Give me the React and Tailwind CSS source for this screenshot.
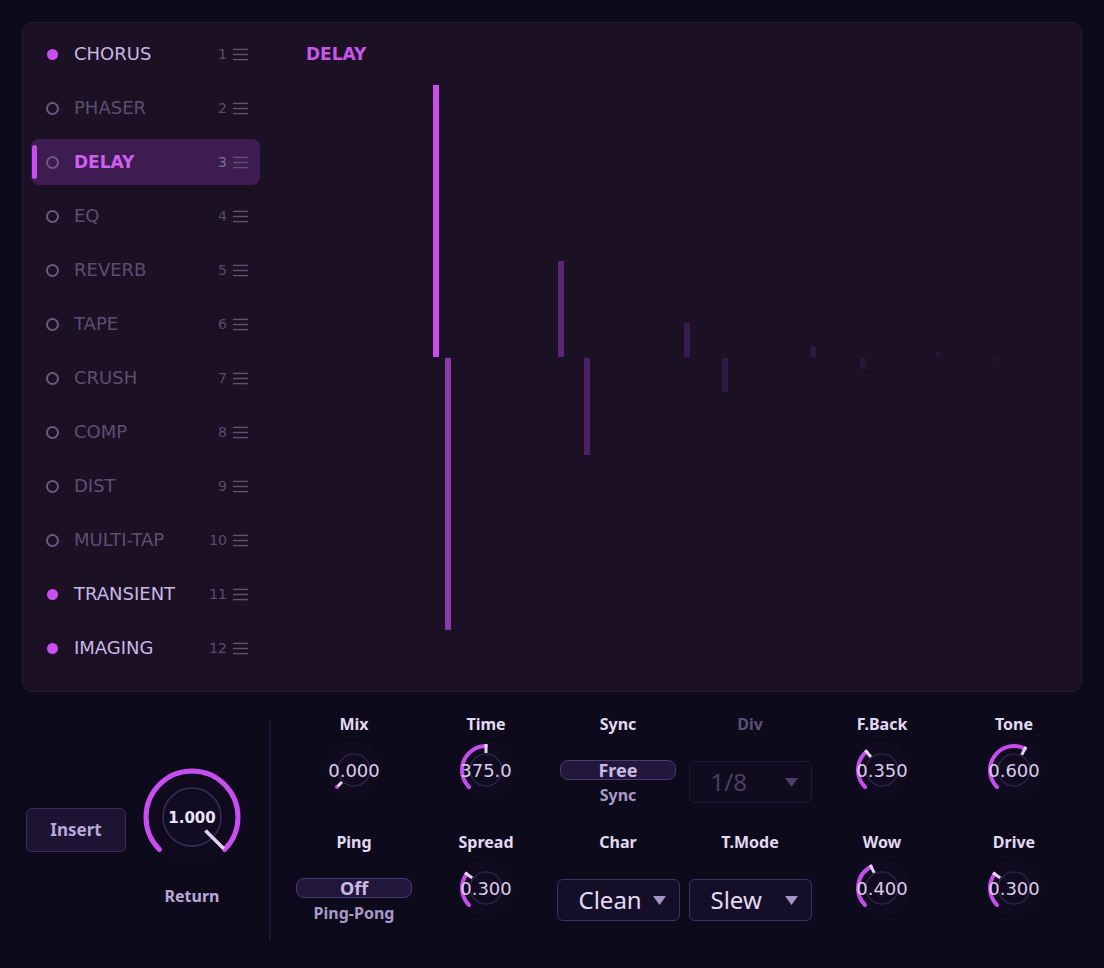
import React from "react";

const SANS = { fontFamily: '"DejaVu Sans", sans-serif' };
const NOTO = { fontFamily: '"Noto Sans", sans-serif' };

const SLOTS = [
  { name: "CHORUS", on: true },
  { name: "PHASER", on: false },
  { name: "DELAY", on: false, selected: true },
  { name: "EQ", on: false },
  { name: "REVERB", on: false },
  { name: "TAPE", on: false },
  { name: "CRUSH", on: false },
  { name: "COMP", on: false },
  { name: "DIST", on: false },
  { name: "MULTI-TAP", on: false },
  { name: "TRANSIENT", on: true },
  { name: "IMAGING", on: true },
];

// impulse bars in page coords, chart svg origin is (280, 80)
const TAPS = [
  { x: 433, y0: 85, y1: 357, c: "#c94ef0" },
  { x: 445, y0: 358, y1: 630, c: "#8b3aa9" },
  { x: 558, y0: 261, y1: 357, c: "#5b2674" },
  { x: 584, y0: 358, y1: 455, c: "#4b2064" },
  { x: 684, y0: 323, y1: 357, c: "#3b1a52" },
  { x: 722, y0: 358, y1: 392, c: "#2f1844" },
  { x: 810, y0: 346, y1: 357, c: "#2b1a3e" },
  { x: 860, y0: 358, y1: 369, c: "#261738" },
  { x: 935, y0: 352, y1: 357, c: "#241633" },
  { x: 993, y0: 358, y1: 361, c: "#221531" },
];

const pt = (cx, cy, r, deg) => {
  const a = (deg * Math.PI) / 180;
  return [cx + r * Math.sin(a), cy - r * Math.cos(a)];
};

const arcPath = (cx, cy, r, a0, a1) => {
  const [x0, y0] = pt(cx, cy, r, a0);
  const [x1, y1] = pt(cx, cy, r, a1);
  if (a1 - a0 < 0.5) return `M${x0} ${y0} L${x0 + 0.01} ${y0}`;
  const large = a1 - a0 > 180 ? 1 : 0;
  return `M${x0} ${y0} A${r} ${r} 0 ${large} 1 ${x1} ${y1}`;
};

const Hamburger = () => (
  <svg width="15" height="13" viewBox="0 0 15 13">
    <rect x="0" y="0.7" width="15" height="1.4" fill="#5f5173" />
    <rect x="0" y="5.8" width="15" height="1.4" fill="#5f5173" />
    <rect x="0" y="10.9" width="15" height="1.4" fill="#5f5173" />
  </svg>
);

const SlotRow = ({ slot, index }) => {
  const textColor = slot.selected
    ? "text-[#d15ef2] font-bold"
    : slot.on
    ? "text-[#c8b8e6]"
    : "text-[#5d4e71]";
  return (
    <div
      className={`relative flex items-center h-[46px] rounded-lg pl-[14px] pr-[12px] ${
        slot.selected ? "bg-[#3e1b50]" : ""
      }`}
    >
      {slot.selected && (
        <div className="absolute left-[1px] top-[6px] w-[5px] h-[34px] rounded-sm bg-[#c94ef0]" />
      )}
      <div className="w-[14px] h-[14px] flex items-center justify-center">
        {slot.on ? (
          <div className="w-[11px] h-[11px] rounded-full bg-[#c94ef0]" />
        ) : (
          <div className="w-[13px] h-[13px] rounded-full border-2 border-[#6b5b81]" />
        )}
      </div>
      <span
        className={`ml-[15px] leading-none ${textColor} ${
          slot.selected ? "text-[17px]" : "text-[18px]"
        }`}
        style={SANS}
      >
        {slot.name}
      </span>
      <span
        className={`ml-auto text-[14px] leading-none ${
          slot.selected ? "text-[#7f6f96]" : "text-[#5a4c6d]"
        }`}
        style={SANS}
      >
        {index + 1}
      </span>
      <div className="ml-[6px] flex items-center">
        <Hamburger />
      </div>
    </div>
  );
};

const Knob = ({ value, text }) => {
  const c = 32;
  const end = -135 + value * 270;
  const [tx0, ty0] = pt(c, c, 17, end);
  const [tx1, ty1] = pt(c, c, value === 0 ? 23 : 26, end);
  return (
    <svg width="64" height="64" viewBox="0 0 64 64">
      <circle cx={c} cy={c} r="29" fill="#110b20" />
      <circle cx={c} cy={c} r="16" fill="none" stroke="#2c2246" strokeWidth="1.5" />
      <path
        d={arcPath(c, c, 24, -135, end)}
        fill="none"
        stroke="#c64cec"
        strokeWidth="4"
        strokeLinecap="round"
      />
      <line x1={tx0} y1={ty0} x2={tx1} y2={ty1} stroke="#e3d6f2" strokeWidth="3" />
      <text
        x={c}
        y={c + 6.5}
        textAnchor="middle"
        fontSize="18"
        fill="#d9cdea"
        style={SANS}
      >
        {text}
      </text>
    </svg>
  );
};

const ReturnKnob = () => {
  const c = 52;
  const [lx0, ly0] = pt(c, c, 19, 135);
  const [lx1, ly1] = pt(c, c, 45, 135);
  return (
    <svg width="104" height="104" viewBox="0 0 104 104">
      <circle cx={c} cy={c} r="50" fill="#0f0a1e" />
      <path
        d={arcPath(c, c, 46, -135, 135)}
        fill="none"
        stroke="#c94ef0"
        strokeWidth="5"
        strokeLinecap="round"
      />
      <circle cx={c} cy={c} r="29" fill="#120c22" stroke="#3a2d58" strokeWidth="1.5" />
      <line x1={lx0} y1={ly0} x2={lx1} y2={ly1} stroke="#e2d3f2" strokeWidth="3.5" />
      <text
        x={c}
        y={c + 5.5}
        textAnchor="middle"
        fontSize="15"
        fontWeight="700"
        fill="#ece4f8"
        style={SANS}
      >
        1.000
      </text>
    </svg>
  );
};

const Toggle = ({ value, sub }) => (
  <div className="flex flex-col items-center mt-[26px]">
    <div
      className="w-[116px] h-[20px] rounded-[8px] border-[1.5px] border-[#4a3a74] bg-[#22173a] flex items-center justify-center text-[18px] font-bold leading-none text-[#c9b9e7]"
      style={NOTO}
    >
      {value}
    </div>
    <div className="mt-[5px] text-[16px] font-bold leading-[20px] text-[#a999c9]" style={NOTO}>
      {sub}
    </div>
  </div>
);

const Caret = ({ color }) => (
  <svg width="13" height="9" viewBox="0 0 13 9">
    <polygon points="0,0 13,0 6.5,9" fill={color} />
  </svg>
);

const Dropdown = ({ value, disabled }) => (
  <div
    className={`mt-[27px] w-[123px] h-[42px] rounded-md flex items-center pl-[21px] pr-[13px] border-[1.5px] ${
      disabled ? "border-[#221a36] bg-[#110b1f]" : "border-[#3d3066] bg-[#150e29]"
    }`}
  >
    <span
      className={`text-[24px] leading-none ${disabled ? "text-[#4b3f62]" : "text-[#e3dbf2]"}`}
      style={NOTO}
    >
      {value}
    </span>
    <div className="ml-auto flex items-center">
      <Caret color={disabled ? "#4b3f62" : "#a495c4"} />
    </div>
  </div>
);

const CONTROLS = [
  { label: "Mix", type: "knob", value: 0, text: "0.000" },
  { label: "Time", type: "knob", value: 0.5, text: "375.0" },
  { label: "Sync", type: "toggle", value: "Free", sub: "Sync" },
  { label: "Div", type: "dropdown", value: "1/8", disabled: true },
  { label: "F.Back", type: "knob", value: 0.35, text: "0.350" },
  { label: "Tone", type: "knob", value: 0.6, text: "0.600" },
  { label: "Ping", type: "toggle", value: "Off", sub: "Ping-Pong" },
  { label: "Spread", type: "knob", value: 0.3, text: "0.300" },
  { label: "Char", type: "dropdown", value: "Clean" },
  { label: "T.Mode", type: "dropdown", value: "Slew" },
  { label: "Wow", type: "knob", value: 0.4, text: "0.400" },
  { label: "Drive", type: "knob", value: 0.3, text: "0.300" },
];

const ControlCell = ({ ctl }) => (
  <div className="h-[118px] flex flex-col items-center">
    <div
      className={`h-[20px] text-[16px] font-bold leading-[20px] ${
        ctl.disabled ? "text-[#5b4f72]" : "text-[#e2daf2]"
      }`}
      style={NOTO}
    >
      {ctl.label}
    </div>
    {ctl.type === "knob" && (
      <div className="mt-[4px]">
        <Knob value={ctl.value} text={ctl.text} />
      </div>
    )}
    {ctl.type === "toggle" && <Toggle value={ctl.value} sub={ctl.sub} />}
    {ctl.type === "dropdown" && <Dropdown value={ctl.value} disabled={ctl.disabled} />}
  </div>
);

export default function App() {
  return (
    <div className="h-[968px] overflow-hidden bg-[#0d0a1b] px-[22px] pt-[22px]">
      {/* top panel: slot list + impulse view */}
      <div className="h-[670px] rounded-[10px] border border-[#231a33] bg-[#1b1024] flex">
        <div className="w-[237px] shrink-0 pl-[8px] pt-[8px] flex flex-col gap-[8px]">
          {SLOTS.map((s, i) => (
            <SlotRow key={s.name} slot={s} index={i} />
          ))}
        </div>
        <div className="flex-1 flex flex-col">
          <div
            className="pl-[46px] pt-[19px] h-[57px] text-[17px] font-bold leading-[24px] text-[#c657ea]"
            style={SANS}
          >
            DELAY
          </div>
          <svg width="790" height="560" viewBox="0 0 790 560" className="ml-[20px]">
            {TAPS.map((t) => (
              <rect
                key={t.x}
                x={t.x - 280}
                y={t.y0 - 80}
                width="6"
                height={t.y1 - t.y0}
                fill={t.c}
              />
            ))}
          </svg>
        </div>
      </div>

      {/* bottom controls */}
      <div className="mt-[22px] flex items-start">
        <div className="w-[247px] shrink-0 flex items-start pl-[4px]">
          <button
            className="mt-[94px] w-[100px] h-[44px] rounded-md border-[1.5px] border-[#3a2c57] bg-[#1d1433] text-[17px] font-bold text-[#b9a9d9]"
            style={NOTO}
          >
            Insert
          </button>
          <div className="ml-[14px] mt-[51px] flex flex-col items-center">
            <ReturnKnob />
            <div className="mt-[17px] text-[16px] font-bold leading-[20px] text-[#b9a9d9]" style={NOTO}>
              Return
            </div>
          </div>
        </div>
        <div className="w-[2px] h-[220px] mt-[6px] bg-[#1f1834]" />
        <div className="ml-[17px] grid grid-cols-[repeat(6,132px)]">
          {CONTROLS.map((c) => (
            <ControlCell key={c.label} ctl={c} />
          ))}
        </div>
      </div>
    </div>
  );
}
